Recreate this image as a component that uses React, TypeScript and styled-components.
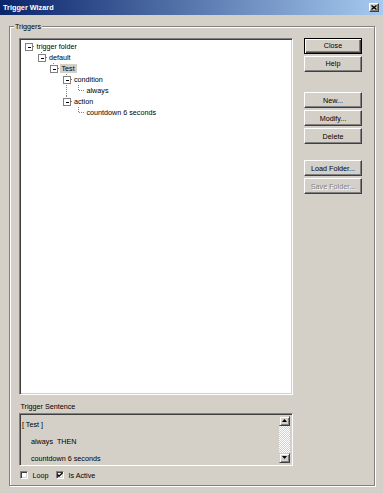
import styled, { createGlobalStyle } from "styled-components";

const GlobalStyle = createGlobalStyle`
  html, body {
    margin: 0;
    padding: 0;
    background: #d4d0c8;
  }
  body {
    font-family: "Liberation Sans", Arial, sans-serif;
    font-size: 7.2px;
    color: #000;
  }
`;

type TreeNode = {
  label: string;
  level: number;
  box: boolean;
  up: boolean;
  down: boolean;
  pass?: number[];
  selected?: boolean;
};

const nodes: TreeNode[] = [
  { label: "trigger folder", level: 0, box: true, up: false, down: false },
  { label: "default", level: 1, box: true, up: true, down: false },
  { label: "Test", level: 2, box: true, up: true, down: false, selected: true },
  { label: "condition", level: 3, box: true, up: true, down: true },
  { label: "always", level: 4, box: false, up: true, down: false, pass: [3] },
  { label: "action", level: 3, box: true, up: true, down: false },
  { label: "countdown 6 seconds", level: 4, box: false, up: true, down: false },
];

const CELL_W = 12.5;
const ROW_H = 11;

function Gutter({ node, col }: { node: TreeNode; col: number }) {
  const cx = 6.5;
  const cy = 5.5;
  const dash = { stroke: "#808080", strokeWidth: 1, strokeDasharray: "1 1" };
  const own = col === node.level;
  return (
    <svg width={CELL_W} height={ROW_H} shapeRendering="crispEdges">
      {!own && node.pass?.includes(col) && <line x1={cx} y1={0} x2={cx} y2={ROW_H} {...dash} />}
      {own && node.up && <line x1={cx} y1={0} x2={cx} y2={node.box ? cy - 3 : cy} {...dash} />}
      {own && node.down && <line x1={cx} y1={node.box ? cy + 3 : cy} x2={cx} y2={ROW_H} {...dash} />}
      {own && <line x1={node.box ? cx + 4 : cx} y1={cy} x2={CELL_W} y2={cy} {...dash} />}
      {own && node.box && (
        <>
          <rect x={cx - 3} y={cy - 3} width={7} height={7} fill="#fff" stroke="#808080" />
          <line x1={cx - 1} y1={cy + 0.5} x2={cx + 2} y2={cy + 0.5} stroke="#000" />
        </>
      )}
    </svg>
  );
}

export default function App() {
  return (
    <>
      <GlobalStyle />
      <Window>
        <TitleBar>
          <Title>Trigger Wizard</Title>
          <CaptionButton>
            <svg width="6" height="5" viewBox="0 0 6 5">
              <path d="M0.5 0.5 L5.5 4.5 M5.5 0.5 L0.5 4.5" stroke="#000" strokeWidth="1.4" />
            </svg>
          </CaptionButton>
        </TitleBar>
        <Body>
          <GroupBox>
            <Legend>Triggers</Legend>
            <GroupInner>
              <LeftColumn>
                <TreeView>
                  {nodes.map((n) => (
                    <TreeRow key={n.label}>
                      {Array.from({ length: n.level + 1 }, (_, i) => (
                        <Gutter key={i} node={n} col={i} />
                      ))}
                      <NodeLabel $selected={n.selected}>{n.label}</NodeLabel>
                    </TreeRow>
                  ))}
                </TreeView>
                <SentenceLabel>Trigger Sentence</SentenceLabel>
                <SentenceBox>
                  <SentenceText>
                    <SentenceLine>[ Test ]</SentenceLine>
                    <SentenceLine $indent>always&nbsp;&nbsp;THEN</SentenceLine>
                    <SentenceLine $indent>countdown 6 seconds</SentenceLine>
                  </SentenceText>
                  <ScrollBar>
                    <ScrollButton>
                      <svg width="5" height="3" viewBox="0 0 5 3">
                        <polygon points="2.5,0 5,3 0,3" fill="#000" />
                      </svg>
                    </ScrollButton>
                    <ScrollTrack />
                    <ScrollButton>
                      <svg width="5" height="3" viewBox="0 0 5 3">
                        <polygon points="0,0 5,0 2.5,3" fill="#000" />
                      </svg>
                    </ScrollButton>
                  </ScrollBar>
                </SentenceBox>
                <CheckRow>
                  <CheckItem>
                    <CheckBox />
                    Loop
                  </CheckItem>
                  <CheckItem>
                    <CheckBox>
                      <svg width="6" height="6" viewBox="0 0 6 6">
                        <polyline points="0.5,2.5 2,4.2 5.5,0.8" fill="none" stroke="#000" strokeWidth="1.3" />
                      </svg>
                    </CheckBox>
                    Is Active
                  </CheckItem>
                </CheckRow>
              </LeftColumn>
              <ButtonColumn>
                <ButtonGroup $top={0}>
                  <Button $default>Close</Button>
                  <Button>Help</Button>
                </ButtonGroup>
                <ButtonGroup $top={20.5}>
                  <Button>New...</Button>
                  <Button>Modify...</Button>
                  <Button>Delete</Button>
                </ButtonGroup>
                <ButtonGroup $top={16}>
                  <Button>Load Folder...</Button>
                  <Button disabled>Save Folder...</Button>
                </ButtonGroup>
              </ButtonColumn>
            </GroupInner>
          </GroupBox>
        </Body>
      </Window>
    </>
  );
}

const Window = styled.div`
  width: 383px;
  height: 493px;
  display: flex;
  flex-direction: column;
  background: #d4d0c8;
  overflow: hidden;
`;

const TitleBar = styled.div`
  height: 15px;
  flex: none;
  display: flex;
  align-items: center;
  justify-content: space-between;
  padding: 0 4px 0 3px;
  background: linear-gradient(to right, #0a246a, #a6caf0);
`;

const Title = styled.div`
  color: #fff;
  font-weight: bold;
  font-size: 7.3px;
`;

const CaptionButton = styled.div`
  width: 10px;
  height: 9px;
  box-sizing: border-box;
  display: flex;
  align-items: center;
  justify-content: center;
  background: #d4d0c8;
  border: 1px solid;
  border-color: #fff #404040 #404040 #fff;
  box-shadow: inset -1px -1px 0 #808080;
`;

const Body = styled.div`
  flex: 1;
  display: flex;
  padding: 11px 8px 7px 9px;
`;

const GroupBox = styled.div`
  flex: 1;
  position: relative;
  border: 1px solid #808080;
  box-shadow: inset 1px 1px 0 #fff, 1px 1px 0 #fff;
`;

const Legend = styled.span`
  position: absolute;
  top: -5px;
  left: 4px;
  padding: 0 1px;
  line-height: 9px;
  background: #d4d0c8;
`;

const GroupInner = styled.div`
  display: grid;
  grid-template-columns: 274px 58px;
  column-gap: 11px;
  padding: 10.5px 0 0 9px;
`;

const LeftColumn = styled.div`
  display: flex;
  flex-direction: column;
`;

const Sunken = styled.div`
  box-sizing: border-box;
  border: 1px solid;
  border-color: #808080 #fff #fff #808080;
  box-shadow: inset 1px 1px 0 #404040, inset -1px -1px 0 #d4d0c8;
`;

const TreeView = styled(Sunken)`
  height: 357px;
  background: #fff;
  padding: 2px;
`;

const TreeRow = styled.div`
  display: flex;
  align-items: center;
  height: 11px;

  svg {
    flex: none;
    display: block;
  }
`;

const NodeLabel = styled.span<{ $selected?: boolean }>`
  line-height: 9px;
  padding: 0 2px;
  white-space: nowrap;
  background: ${(p) => (p.$selected ? "#d4d0c8" : "transparent")};
`;

const SentenceLabel = styled.div`
  margin-top: 6px;
  line-height: 11px;
  padding-left: 1.5px;
`;

const SentenceBox = styled(Sunken)`
  margin-top: 1px;
  height: 53px;
  display: flex;
  padding: 2px;
  background: #d4d0c8;
`;

const SentenceText = styled.div`
  flex: 1;
  line-height: 17px;
`;

const SentenceLine = styled.div<{ $indent?: boolean }>`
  padding-left: ${(p) => (p.$indent ? "9px" : "0")};
  white-space: nowrap;
`;

const ScrollBar = styled.div`
  width: 11px;
  display: flex;
  flex-direction: column;
`;

const Raised = styled.div`
  box-sizing: border-box;
  background: #d4d0c8;
  border: 1px solid;
  border-color: #d4d0c8 #404040 #404040 #d4d0c8;
  box-shadow: inset 1px 1px 0 #fff, inset -1px -1px 0 #808080;
`;

const ScrollButton = styled(Raised)`
  height: 10px;
  display: flex;
  align-items: center;
  justify-content: center;
`;

const ScrollTrack = styled.div`
  flex: 1;
  background: repeating-conic-gradient(#fff 0 25%, #d4d0c8 0 50%) 0 0 / 2px 2px;
`;

const CheckRow = styled.div`
  margin-top: 4px;
  height: 11px;
  display: flex;
  align-items: center;
  gap: 7.5px;
  padding-left: 1px;
`;

const CheckItem = styled.label`
  display: flex;
  align-items: center;
  gap: 4.5px;
  line-height: 11px;
`;

const CheckBox = styled(Sunken)`
  width: 8px;
  height: 8px;
  background: #fff;
  display: flex;
  align-items: center;
  justify-content: center;
`;

const ButtonColumn = styled.div`
  display: flex;
  flex-direction: column;
`;

const ButtonGroup = styled.div<{ $top: number }>`
  display: flex;
  flex-direction: column;
  gap: 2px;
  margin-top: ${(p) => p.$top}px;
`;

const Button = styled.button<{ $default?: boolean }>`
  box-sizing: border-box;
  width: 58px;
  height: 16px;
  padding: 0;
  font-family: inherit;
  font-size: 7.2px;
  color: #000;
  background: #d4d0c8;
  border: 1px solid;
  border-color: ${(p) => (p.$default ? "#000" : "#fff #404040 #404040 #fff")};
  box-shadow: ${(p) =>
    p.$default
      ? "inset 1px 1px 0 #fff, inset -1px -1px 0 #404040, inset -2px -2px 0 #808080"
      : "inset -1px -1px 0 #808080"};

  &:disabled {
    color: #808080;
    text-shadow: 1px 1px 0 #fff;
  }
`;
